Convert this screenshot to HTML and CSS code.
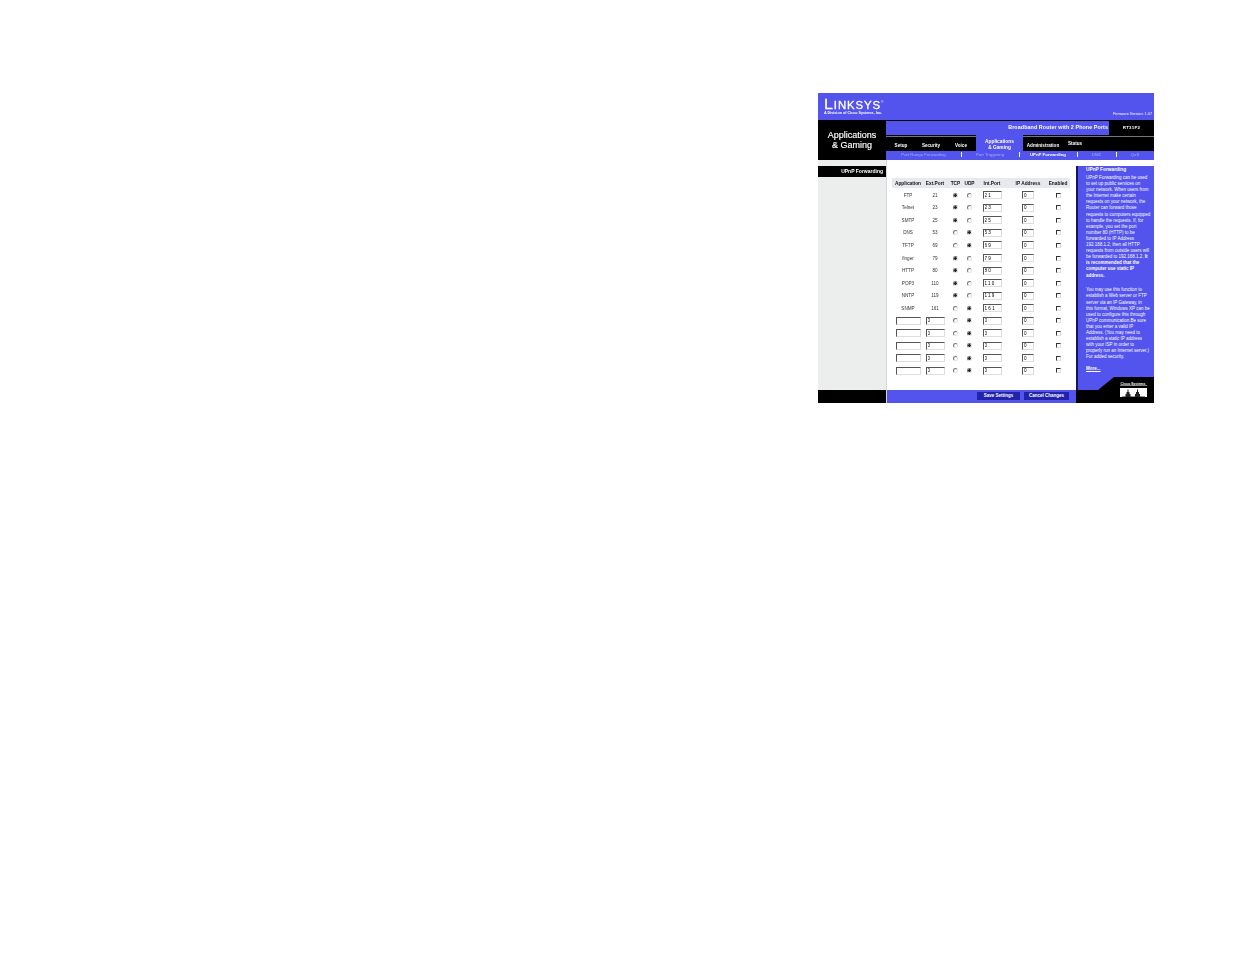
FILE: index.html
```html
<!DOCTYPE html>
<html lang="en">
<head>
<meta charset="utf-8">
<title>UPnP Forwarding</title>
<link rel="stylesheet" href="styles.css">
</head>
<body>
<div class="frame">
  <header class="brand">
    <div class="logo">
      <div class="logo-word"><span class="big">L</span>INKSYS<sup>®</sup></div>
      <div class="logo-sub">A Division of Cisco Systems, Inc.</div>
    </div>
    <div class="firmware">Firmware Version: 1.07</div>
  </header>
  <div class="masthead">
    <h1 class="title">Applications<br>&amp; Gaming</h1>
    <div class="navs">
      <div class="product">
        <div class="product-name">Broadband Router with 2 Phone Ports</div>
        <div class="product-model">RT31P2</div>
      </div>
      <nav class="tabs">
        <a class="tab t1">Setup</a>
        <a class="tab t2">Security</a>
        <a class="tab t3">Voice</a>
        <a class="tab active">Applications<br>&amp; Gaming</a>
        <a class="tab t4">Administration</a>
        <a class="tab t5">Status</a>
      </nav>
      <nav class="subnav">
        <a>Port Range Forwarding</a>
        <a>Port Triggering</a>
        <a class="on">UPnP Forwarding</a>
        <a>DMZ</a>
        <a class="last">QoS</a>
      </nav>
    </div>
  </div>
  <div class="content">
    <div class="side">
      <div class="side-label">UPnP Forwarding</div>
      <div class="side-fill"></div>
      <div class="side-foot"></div>
    </div>
    <main class="main">
      <div class="form">
        <div class="row head"><span>Application</span><span>Ext.Port</span><span>TCP</span><span>UDP</span><span>Int.Port</span><span>IP Address</span><span>Enabled</span></div>
        <div class="row"><span>FTP</span><span>21</span><input type="radio" name="r1" checked><input type="radio" name="r1"><input class="int" value="21"><input class="ip" value="0"><input type="checkbox"></div>
        <div class="row"><span>Telnet</span><span>23</span><input type="radio" name="r2" checked><input type="radio" name="r2"><input class="int" value="23"><input class="ip" value="0"><input type="checkbox"></div>
        <div class="row"><span>SMTP</span><span>25</span><input type="radio" name="r3" checked><input type="radio" name="r3"><input class="int" value="25"><input class="ip" value="0"><input type="checkbox"></div>
        <div class="row"><span>DNS</span><span>53</span><input type="radio" name="r4"><input type="radio" name="r4" checked><input class="int" value="53"><input class="ip" value="0"><input type="checkbox"></div>
        <div class="row"><span>TFTP</span><span>69</span><input type="radio" name="r5"><input type="radio" name="r5" checked><input class="int" value="69"><input class="ip" value="0"><input type="checkbox"></div>
        <div class="row"><span>finger</span><span>79</span><input type="radio" name="r6" checked><input type="radio" name="r6"><input class="int" value="79"><input class="ip" value="0"><input type="checkbox"></div>
        <div class="row"><span>HTTP</span><span>80</span><input type="radio" name="r7" checked><input type="radio" name="r7"><input class="int" value="80"><input class="ip" value="0"><input type="checkbox"></div>
        <div class="row"><span>POP3</span><span>110</span><input type="radio" name="r8" checked><input type="radio" name="r8"><input class="int" value="110"><input class="ip" value="0"><input type="checkbox"></div>
        <div class="row"><span>NNTP</span><span>119</span><input type="radio" name="r9" checked><input type="radio" name="r9"><input class="int" value="119"><input class="ip" value="0"><input type="checkbox"></div>
        <div class="row"><span>SNMP</span><span>161</span><input type="radio" name="r10"><input type="radio" name="r10" checked><input class="int" value="161"><input class="ip" value="0"><input type="checkbox"></div>
        <div class="row"><input class="app"><input class="ext" value="0"><input type="radio" name="r11"><input type="radio" name="r11" checked><input class="int" value="0"><input class="ip" value="0"><input type="checkbox"></div>
        <div class="row"><input class="app"><input class="ext" value="0"><input type="radio" name="r12"><input type="radio" name="r12" checked><input class="int" value="0"><input class="ip" value="0"><input type="checkbox"></div>
        <div class="row"><input class="app"><input class="ext" value="0"><input type="radio" name="r13"><input type="radio" name="r13" checked><input class="int" value="0"><input class="ip" value="0"><input type="checkbox"></div>
        <div class="row"><input class="app"><input class="ext" value="0"><input type="radio" name="r14"><input type="radio" name="r14" checked><input class="int" value="0"><input class="ip" value="0"><input type="checkbox"></div>
        <div class="row"><input class="app"><input class="ext" value="0"><input type="radio" name="r15"><input type="radio" name="r15" checked><input class="int" value="0"><input class="ip" value="0"><input type="checkbox"></div>
      </div>
      <div class="actions">
        <button class="btn save">Save Settings</button>
        <button class="btn cancel">Cancel Changes</button>
      </div>
    </main>
    <aside class="help">
      <div class="help-body">
        <h2>UPnP Forwarding</h2>
        <p>UPnP Forwarding can be used<br>to set up public services on<br>your network. When users from<br>the Internet make certain<br>requests on your network, the<br>Router can forward those<br>requests to computers equipped<br>to handle the requests. If, for<br>example, you set the port<br>number 80 (HTTP) to be<br>forwarded to IP Address<br>192.168.1.2, then all HTTP<br>requests from outside users will<br>be forwarded to 192.168.1.2. <b>It<br>is recommended that the<br>computer use static IP<br>address.</b></p>
        <p>You may use this function to<br>establish a Web server or FTP<br>server via an IP Gateway, in<br>this format, Windows XP can be<br>used to configure this through<br>UPnP communication.Be sure<br>that you enter a valid IP<br>Address. (You may need to<br>establish a static IP address<br>with your ISP in order to<br>properly run an Internet server.)<br>For added security.</p>
        <a class="more">More...</a>
      </div>
      <svg class="cisco" viewBox="0 0 78 26" width="78" height="26" aria-label="Cisco Systems">
        <path class="slant" d="M0 13H22L38 0H78V26H0Z"/>
        <text class="cisco-name" x="44.500" y="7.500">Cisco Systems</text>
        <rect class="cisco-line" x="44" y="8.500" width="27" height=".5"/>
        <rect class="cisco-box" x="44" y="11" width="27" height="9"/>
        <path class="cisco-peaks" d="M46 19.500H49.500V17H50.500V15H51.500V12.500H52.500V15H53.500V17H54.500V19.500H59V17H60V15H61V12.500H62V15H63V17H64V19.500H69V20H46Z"/>
      </svg>
    </aside>
  </div>
</div>
</body>
</html>
```

FILE: styles.css
```css
* { box-sizing: border-box; }
html, body { margin: 0; padding: 0; background: #fff; }
body { font-family: "Liberation Sans", Arial, sans-serif; color: #222; }

.frame {
  width: 336px;
  height: 310px;
  margin: 93px 0 0 818px;
  display: flex;
  flex-direction: column;
  filter: blur(.3px);
}

/* brand bar */
.brand {
  height: 27px;
  background: #5353ee;
  display: flex;
  justify-content: space-between;
  color: #fff;
}
.logo { padding: 5px 0 0 6px; }
.logo-word { font-size: 10px; line-height: 12px; height: 12px; letter-spacing: .8px; transform: scaleX(1.14); transform-origin: left; white-space: nowrap; -webkit-text-stroke: .3px #fff; }
.logo-word .big { font-size: 14px; }
.logo-word sup { font-size: 3px; vertical-align: 6px; line-height: 0; -webkit-text-stroke: 0; }
.logo-sub { margin-top: 1px; font-size: 3.700px; font-weight: bold; line-height: 5px; white-space: nowrap; }
.firmware { font-size: 3.800px; align-self: flex-end; padding: 0 2px 3px 0; line-height: 5px; }

/* masthead */
.masthead { height: 40px; background: #000; display: flex; color: #fff; }
.title { width: 68px; margin: 0; padding-top: 10px; font-size: 9px; line-height: 10px; font-weight: normal; text-align: center; -webkit-text-stroke: .15px #fff; }
.navs { width: 268px; display: flex; flex-direction: column; }
.product { height: 14px; margin-top: 1px; display: flex; font-size: 5.400px; font-weight: bold; line-height: 13px; }
.product-name { width: 223px; background: #5353ee; text-align: right; padding-right: 1px; letter-spacing: .07px; }
.product-model { flex: 1; text-align: center; font-size: 4.400px; letter-spacing: .2px; }
.tabs { height: 16px; margin-top: 1px; display: grid; grid-template-columns: 30px 30px 30px 47px 40px 91px; border-top: 1.500px solid #777; font-size: 4.600px; font-weight: bold; }
.tab { text-align: center; line-height: 5.600px; padding-top: 6px; color: #fff; white-space: nowrap; }
.tabs .t5 { text-align: left; padding: 4.500px 0 0 5px; }
.tab.active { background: #5353ee; margin-top: -2px; padding-top: 4.500px; color: #fff; font-size: 4.800px; line-height: 6px; }
.subnav { height: 9px; background: #5353ee; display: grid; grid-template-columns: 75px 58px 58px 39px 38px; font-size: 4.300px; line-height: 8px; color: #a6b0ff; text-align: center; }
.subnav a { position: relative; }
.subnav a:not(.last)::after { content: ""; position: absolute; right: -.5px; top: 1px; width: 1px; height: 5px; background: #fff; }
.subnav .on { color: #fff; font-weight: bold; }

/* content */
.content { flex: 1; display: flex; min-height: 0; }
.side { width: 68px; display: flex; flex-direction: column; background: #eceeee; padding-top: 6px; }
.side-label { height: 11px; background: #000; color: #fff; font-size: 5px; font-weight: bold; line-height: 11px; text-align: right; padding-right: 3px; }
.side-fill { flex: 1; }
.side-foot { height: 13px; background: #000; }

.main { width: 190px; display: flex; flex-direction: column; border-left: 1px solid #d5d7dc; }
.form { flex: 1; padding: 18px 6px 0 5px; }
.row {
  display: grid;
  grid-template-columns: 32px 22px 19px 9px 36px 36px 24px;
  height: 12.550px;
  align-items: center;
  justify-items: center;
  font-size: 4.600px;
  color: #333;
}
.row.head { height: 10px; background: #e7e9ef; font-weight: bold; font-size: 4.800px; color: #111; margin-bottom: 1px; }
input { margin: 0; padding: 0 0 0 1px; font: inherit; background: #fff; border: 1px solid; border-color: #555 #ddd #ddd #555; height: 8px; border-radius: 0; outline: 0; }
input.app { width: 25px; }
input.ext { width: 19px; }
input.int { width: 19px; letter-spacing: 1.300px; }
input.ip { width: 12px; }
input[type=radio], input[type=checkbox] { appearance: none; -webkit-appearance: none; width: 5px; height: 5px; padding: 0; }
input[type=radio] { border-radius: 50%; border-color: #777 #e4e4e4 #e4e4e4 #777; }
input[type=radio]:checked { background: radial-gradient(circle, #222 0 1.200px, #fff 1.800px); }
input[type=checkbox] { border-color: #333 #e0e0e0 #e0e0e0 #333; }

.actions { height: 13px; background: #5353ee; display: flex; gap: 4px; padding: 2px 0 0 90px; }
.btn { height: 8px; padding: 0; border: 0; background: #2222aa; color: #fff; font: bold 4.500px "Liberation Sans", Arial, sans-serif; line-height: 8px; }
.save { width: 43px; }
.cancel { width: 45px; }

/* help */
.help { width: 78px; margin-top: 6px; display: flex; flex-direction: column; color: #fff; background: #5353ee; border-left: 2px solid #15155e; }
.help-body { flex: 1; padding: 1px 0 0 8px; font-size: 4.500px; line-height: 6.100px; }
.help h2 { margin: 0 0 2px; font-size: 4.800px; line-height: 6px; }
.help p { margin: 0 0 8.800px; white-space: nowrap; }
.help p + p { margin-bottom: 5.500px; }
.more { font-weight: bold; text-decoration: underline; }
.cisco { display: block; margin-left: -2px; flex: none; }
.slant { fill: #000; }
.cisco-name { fill: #fff; font-size: 3.500px; font-weight: bold; font-family: "Liberation Sans", Arial, sans-serif; }
.cisco-line, .cisco-box { fill: #fff; }
.cisco-peaks { fill: #222; }
```
